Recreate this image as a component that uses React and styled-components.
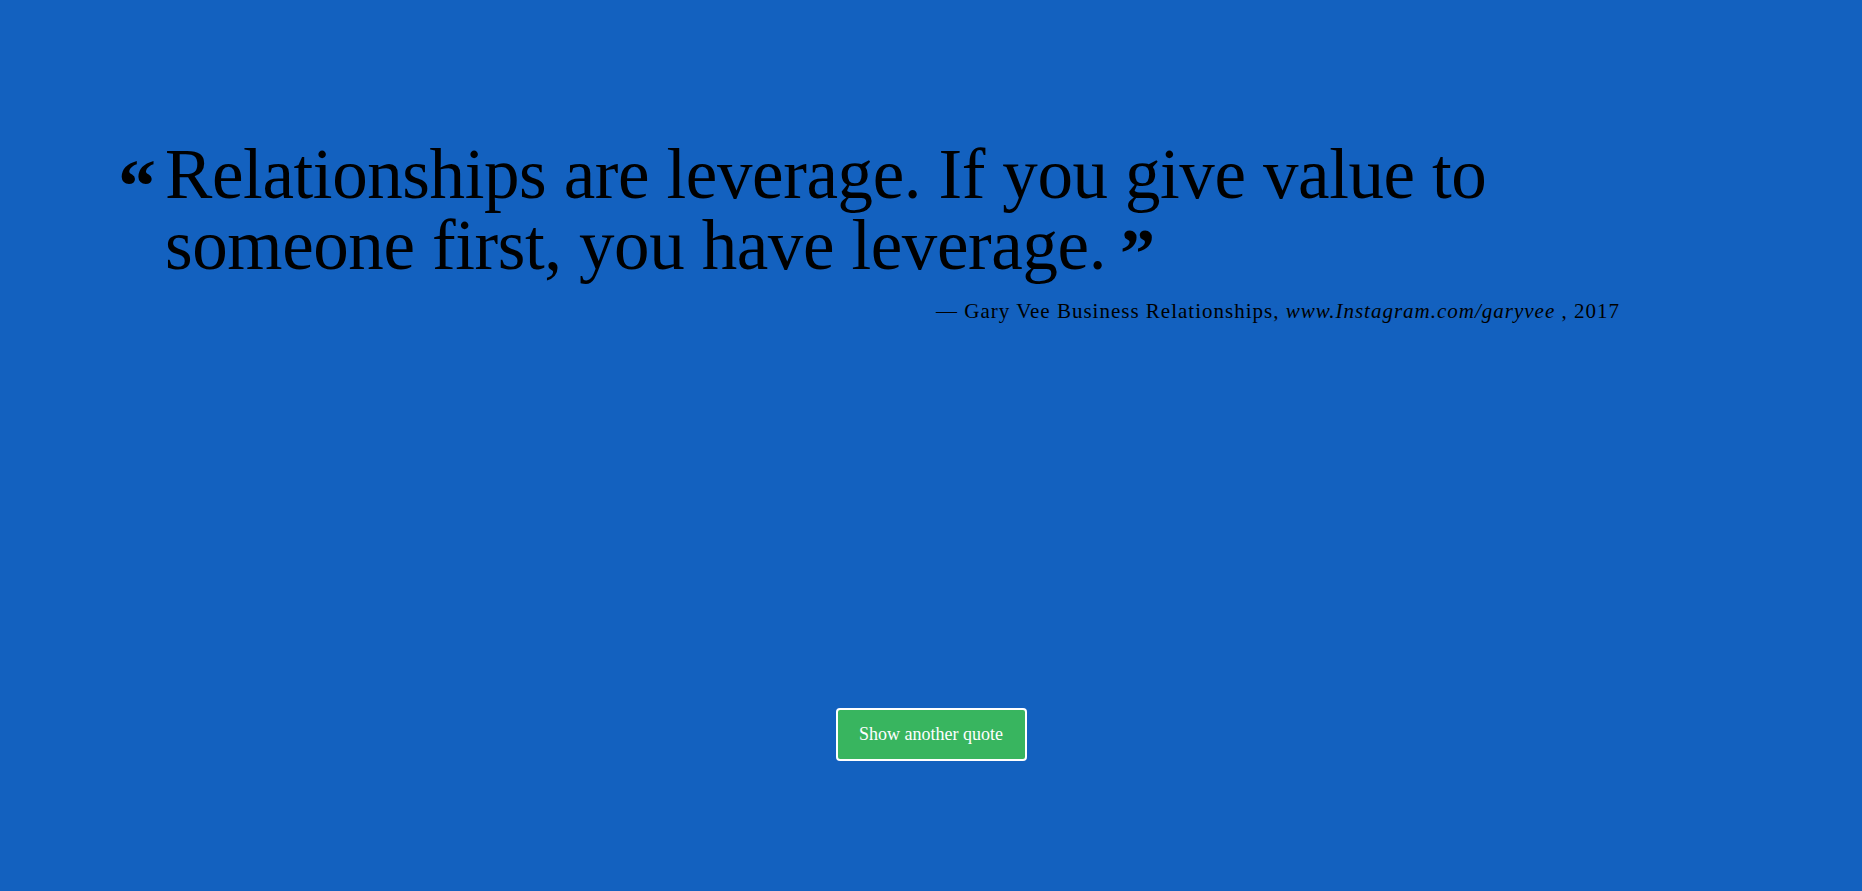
import React from "react";
import styled, { createGlobalStyle } from "styled-components";

const GlobalStyle = createGlobalStyle`
  html, body {
    margin: 0;
    padding: 0;
    background: #1361bf;
  }
  body {
    font-family: "Liberation Serif", "DejaVu Serif", serif;
  }
`;

const Page = styled.div`
  width: 100%;
  min-height: 100vh;
  background: #1361bf;
  display: flex;
  flex-direction: column;
  align-items: center;
`;

const QuoteBox = styled.figure`
  margin: 0;
  width: 100%;
  box-sizing: border-box;
  padding: 139px 242px 0 118px;
`;

const QuoteText = styled.blockquote`
  margin: 0;
  display: flex;
  align-items: flex-start;
  color: #000;
`;

const OpenMark = styled.span`
  font-size: 76px;
  font-weight: bold;
  line-height: 1;
  width: 47px;
  flex: none;
  padding-top: 9px;
`;

const Words = styled.p`
  margin: 0;
  max-width: 1340px;
  font-size: 71px;
  line-height: 71px;
  letter-spacing: -0.4px;
`;

const CloseMark = styled.span`
  font-size: 70px;
  font-weight: bold;
  line-height: 0;
  margin-left: 14px;
  position: relative;
  top: 8px;
`;

const Caption = styled.figcaption`
  margin-top: 18px;
  text-align: right;
  font-size: 21px;
  letter-spacing: 1px;
  color: #000;
`;

const Source = styled.cite`
  font-style: italic;
`;

const Button = styled.button`
  margin-top: 384px;
  width: 191px;
  height: 53px;
  background: #38b55f;
  color: #fff;
  border: 2px solid #fff;
  border-radius: 4px;
  font-family: "Liberation Serif", "DejaVu Serif", serif;
  font-size: 18px;
  cursor: pointer;
`;

export default function App() {
  return (
    <Page>
      <GlobalStyle />
      <QuoteBox>
        <QuoteText>
          <OpenMark>“</OpenMark>
          <Words>
            Relationships are leverage. If you give value to someone first, you
            have leverage.
            <CloseMark>”</CloseMark>
          </Words>
        </QuoteText>
        <Caption>
          — Gary Vee Business Relationships, <Source>www.Instagram.com/garyvee</Source> , 2017
        </Caption>
      </QuoteBox>
      <Button>Show another quote</Button>
    </Page>
  );
}
